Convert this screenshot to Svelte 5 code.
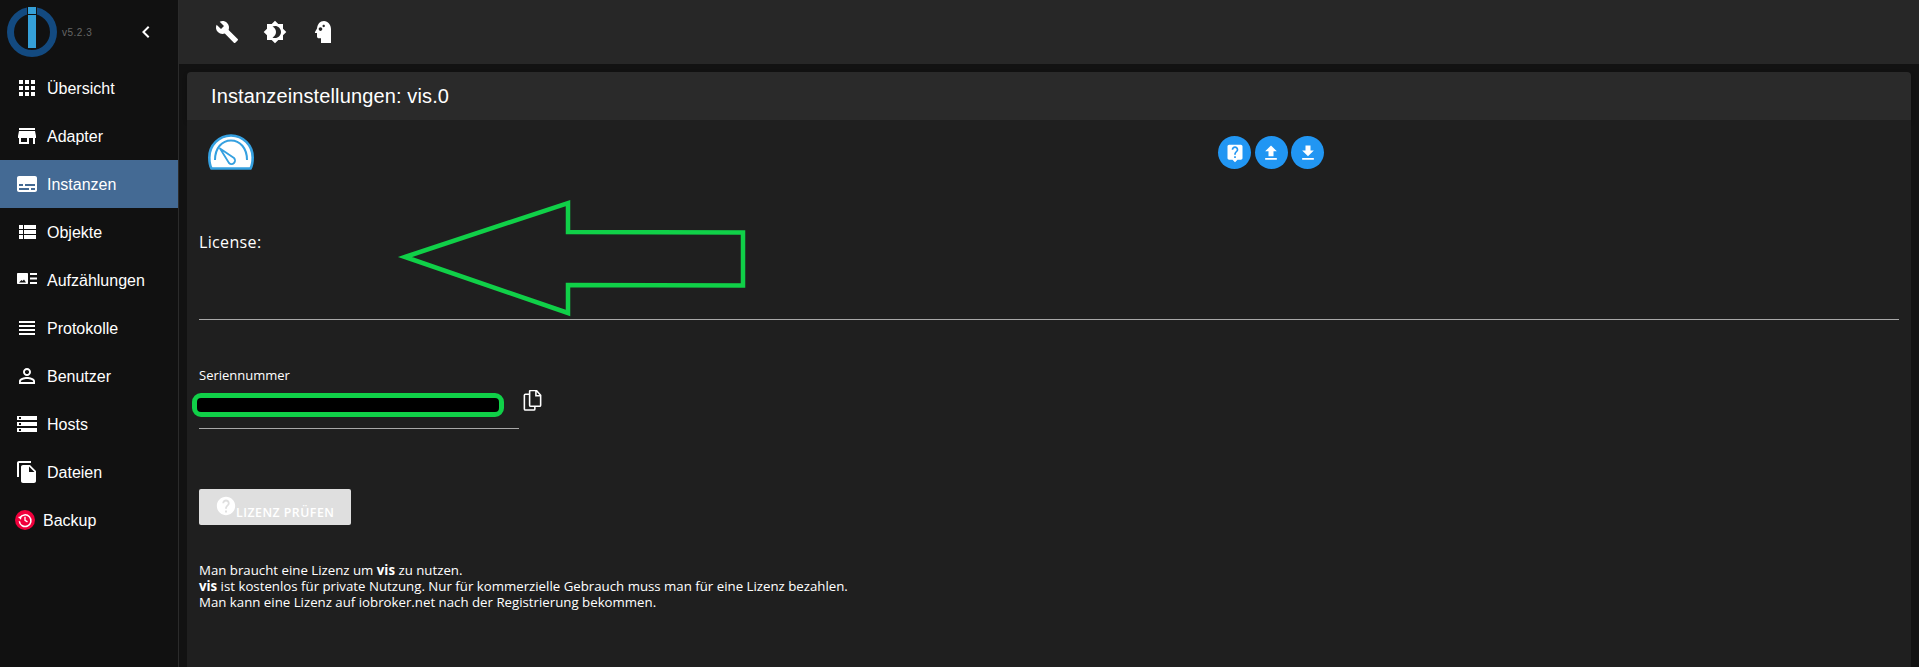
<script lang="ts">
  type NavItem = { label: string; path: string; active?: boolean };

  const nav: NavItem[] = [
    { label: 'Übersicht', path: 'M4 8h4V4H4v4zm6 12h4v-4h-4v4zm-6 0h4v-4H4v4zm0-6h4v-4H4v4zm6 0h4v-4h-4v4zm6-10v4h4V4h-4zm-6 4h4V4h-4v4zm6 6h4v-4h-4v4zm0 6h4v-4h-4v4z' },
    { label: 'Adapter', path: 'M20 4H4v2h16V4zm1 10v-2l-1-5H4l-1 5v2h1v6h10v-6h4v6h2v-6h1zm-9 4H6v-4h6v4z' },
    { label: 'Instanzen', active: true, path: 'M20 4H4c-1.1 0-2 .9-2 2v12c0 1.1.9 2 2 2h16c1.1 0 2-.9 2-2V6c0-1.1-.9-2-2-2zM4 12h4v2H4v-2zm10 6H4v-2h10v2zm6 0h-4v-2h4v2zm0-4H10v-2h10v2z' },
    { label: 'Objekte', path: 'M4 14h4v-4H4v4zm0 5h4v-4H4v4zM4 9h4V5H4v4zm5 5h12v-4H9v4zm0 5h12v-4H9v4zM9 5v4h12V5H9z' },
    { label: 'Aufzählungen', path: 'M3 5h9c.6 0 1 .4 1 1v9c0 .6-.4 1-1 1H3c-.6 0-1-.4-1-1V6c0-.6.4-1 1-1zm1 9.500h7l-2-3-1.500 1.500-1-1zM15 5h7v2h-7zm0 4.500h7v2h-7zm0 4.500h7v2h-7z' },
    { label: 'Protokolle', path: 'M4 15h16v-2H4v2zm0 4h16v-2H4v2zm0-8h16V9H4v2zm0-6v2h16V5H4z' },
    { label: 'Benutzer', path: 'M12 5.900c1.160 0 2.100.94 2.100 2.100s-.94 2.100-2.100 2.100S9.900 9.160 9.900 8s.94-2.100 2.100-2.100m0 9c2.970 0 6.100 1.460 6.100 2.100v1.100H5.900V17c0-.64 3.130-2.100 6.100-2.100M12 4C9.790 4 8 5.790 8 8s1.790 4 4 4 4-1.790 4-4-1.790-4-4-4zm0 9c-2.670 0-8 1.340-8 4v3h16v-3c0-2.660-5.330-4-8-4z' },
    { label: 'Hosts', path: 'M2 20h20v-4H2v4zm2-3h2v2H4v-2zM2 4v4h20V4H2zm4 3H4V5h2v2zm-4 7h20v-4H2v4zm2-3h2v2H4v-2z' },
    { label: 'Dateien', path: 'M16 1H4c-1.100 0-2 .9-2 2v14h2V3h12V1zm-1 4l6 6v10c0 1.100-.9 2-2 2H7.990C6.890 23 6 22.100 6 21l.01-14c0-1.100.89-2 1.990-2h7zm-1 7h5.500L14 6.500V12z' }
  ];

  const wrench = 'M22.700 19l-9.100-9.100c.9-2.300.4-5-1.500-6.900-2-2-5-2.400-7.400-1.300L9 6 6 9 1.600 4.700C.4 7.100.9 10.100 2.900 12.100c1.900 1.900 4.600 2.400 6.900 1.500l9.100 9.100c.4.4 1 .4 1.400 0l2.300-2.300c.5-.4.5-1.100.1-1.400z';
  const brightness = 'M20 8.690V4h-4.690L12 .69 8.690 4H4v4.690L.69 12 4 15.310V20h4.690L12 23.310 15.310 20H20v-4.690L23.310 12 20 8.690zM12 18c-.89 0-1.740-.2-2.500-.55C11.560 16.500 13 14.420 13 12s-1.440-4.500-3.500-5.450C10.260 6.200 11.110 6 12 6c3.310 0 6 2.690 6 6s-2.690 6-6 6z';
  const head = 'M13 1C9 1 6.500 4 6 8.500L4 12c-.2.500 0 1 .5 1H6v3.500c0 1 .8 1.800 2 1.800h2v4.700h10V9c0-4-3-8-7-8zM9.500 7.300c1 0 1.800.8 1.800 1.800s-.8 1.800-1.800 1.800-1.800-.8-1.800-1.800.8-1.800 1.800-1.800zm3.200-2.500c.7 0 1.200.5 1.200 1.200s-.5 1.200-1.200 1.200-1.200-.5-1.200-1.200.5-1.200 1.200-1.200z';

  const actions = [
    'M19 2H5c-1.110 0-2 .9-2 2v14c0 1.100.89 2 2 2h4l3 3 3-3h4c1.100 0 2-.9 2-2V4c0-1.100-.9-2-2-2zm-6 16h-2v-2h2v2zm2.070-7.750l-.9.92C13.450 11.900 13 12.500 13 14h-2v-.5c0-1.100.45-2.100 1.170-2.830l1.240-1.260c.37-.36.59-.86.59-1.410 0-1.100-.9-2-2-2s-2 .9-2 2H8c0-2.210 1.790-4 4-4s4 1.790 4 4c0 .88-.36 1.680-.93 2.250z',
    'M9 16h6v-6h4l-7-7-7 7h4zm-4 2h14v2H5z',
    'M19 9h-4V3H9v6H5l7 7 7-7zM5 18v2h14v-2H5z'
  ];
</script>

<div class="app">
  <aside class="sidebar">
    <div class="brand">
      <svg class="logo" viewBox="0 0 50 50" width="50" height="50">
        <circle cx="25" cy="25" r="21.500" fill="none" stroke="#134a80" stroke-width="7" />
        <rect x="20" y="0" width="10" height="10" fill="#111" />
        <rect x="21" y="0" width="8" height="7" fill="#35a0d8" />
        <rect x="21" y="8" width="8" height="33" fill="#35a0d8" />
      </svg>
      <span class="version">v5.2.3</span>
      <svg class="collapse" viewBox="0 0 24 24" width="24" height="24">
        <path fill="#fff" d="M15.410 7.410 14 6l-6 6 6 6 1.410-1.410L10.830 12z" />
      </svg>
    </div>

    <nav>
      {#each nav as item}
        <div class="nav-item" class:active={item.active}>
          <svg viewBox="0 0 24 24" width="24" height="24"><path fill="#fff" d={item.path} /></svg>
          <span>{item.label}</span>
        </div>
      {/each}
      <div class="nav-item backup">
        <svg viewBox="0 0 24 24" width="20" height="20">
          <circle cx="12" cy="12" r="12" fill="#f0003c" />
          <path fill="none" stroke="#fff" stroke-width="1.800" d="M6 9.500A7 7 0 1 1 5.200 13.500" />
          <path fill="#fff" d="M3.500 8.500 7.800 7.600 7.200 11.800z" />
          <path fill="none" stroke="#fff" stroke-width="1.600" d="M12 8v4.500l3 1.800" />
        </svg>
        <span>Backup</span>
      </div>
    </nav>
  </aside>

  <main class="main">
    <header class="topbar">
      <svg viewBox="0 0 24 24" width="24" height="24"><path fill="#fff" d={wrench} /></svg>
      <svg viewBox="0 0 24 24" width="24" height="24"><path fill="#fff" d={brightness} /></svg>
      <svg viewBox="0 0 24 24" width="24" height="24"><path fill="#fff" fill-rule="evenodd" d={head} /></svg>
    </header>

    <section class="page">
      <h1 class="title">Instanzeinstellungen: vis.0</h1>

      <div class="panel">
        <div class="panel-top">
          <svg class="gauge" viewBox="0 0 46 36" width="46" height="36">
            <path d="M3.500 34.500C1.500 31 1.300 27 1.300 23.500A21.700 22 0 0 1 44.700 23.500C44.700 27 44.500 31 42.500 34.500Z" fill="#fff" stroke="#35a0e0" stroke-width="2.600" stroke-linejoin="round" />
            <path d="M7 26C7 14 14 6.500 23 6.500S39 14 39 26" fill="none" stroke="#35a0e0" stroke-width="2" />
            <path d="M12 14.500 26 24a3.500 3.500 0 0 1-5 5z" fill="#fff" stroke="#35a0e0" stroke-width="1.800" stroke-linejoin="round" />
          </svg>
          <div class="actions">
            {#each actions as d}
              <button type="button" class="round">
                <svg viewBox="0 0 24 24" width="20" height="20"><path fill="#fff" d={d} /></svg>
              </button>
            {/each}
          </div>
        </div>

        <div class="license">License:</div>

        <div class="serial">
          <label for="serial-input">Seriennummer</label>
          <div class="serial-row">
            <div class="field">
              <div id="serial-input" class="redacted"></div>
            </div>
            <svg class="copy" viewBox="2 1 17.500 20" width="19" height="21">
              <path fill="none" stroke="#fff" stroke-width="1.500" d="M9 1.500h5.500l4 4.500v9.500c0 .6-.4 1-1 1H9c-.6 0-1-.4-1-1V2.500c0-.6.4-1 1-1zM14 1.500V6.500h4.500M8 5H4c-.6 0-1 .4-1 1v13c0 .6.4 1 1 1h8c.6 0 1-.4 1-1v-2.500" />
            </svg>
          </div>
        </div>

        <button type="button" class="check">
          <svg viewBox="0 0 24 24" width="22" height="22"><path fill="#fff" d="M12 2C6.480 2 2 6.480 2 12s4.480 10 10 10 10-4.480 10-10S17.520 2 12 2zm1 17h-2v-2h2v2zm2.070-7.750l-.9.92C13.450 12.900 13 13.500 13 15h-2v-.5c0-1.100.45-2.100 1.170-2.830l1.240-1.260c.37-.36.59-.86.59-1.410 0-1.100-.9-2-2-2s-2 .9-2 2H8c0-2.210 1.790-4 4-4s4 1.790 4 4c0 .88-.36 1.680-.93 2.250z" /></svg>
          <span>LIZENZ PRÜFEN</span>
        </button>

        <p class="note">
          Man braucht eine Lizenz um <b>vis</b> zu nutzen.<br />
          <b>vis</b> ist kostenlos für private Nutzung. Nur für kommerzielle Gebrauch muss man für eine Lizenz bezahlen.<br />
          Man kann eine Lizenz auf iobroker.net nach der Registrierung bekommen.
        </p>
      </div>
    </section>
  </main>

  <!-- hand-drawn annotation sitting on top of the screenshot -->
  <svg class="arrow" viewBox="0 0 1919 667" width="1919" height="667">
    <path d="M405 257 568 203V232L743 232.500V285.500L568 285V313Z" fill="none" stroke="#10d048" stroke-width="4.500" />
  </svg>
</div>

<style>
  :global(body) {
    background: #121212;
  }

  .app {
    position: relative;
    display: flex;
    height: 667px;
    overflow: hidden;
    background: #121212;
    color: #fff;
    font-family: "Liberation Sans", Arial, sans-serif;
  }

  .sidebar {
    flex: 0 0 178px;
    border-right: 1px solid #2b2b2b;
    background: #111;
  }

  .brand {
    display: flex;
    align-items: center;
    height: 64px;
    padding-left: 7px;
  }

  .logo {
    flex: none;
  }

  .version {
    margin: 0 0 0 5px;
    color: #666;
    font-size: 10px;
    letter-spacing: 0.5px;
  }

  .collapse {
    margin-left: 42px;
  }

  .nav-item {
    display: flex;
    align-items: center;
    gap: 8px;
    height: 48px;
    padding-left: 15px;
    font-size: 16px;
  }

  .nav-item span {
    padding-top: 2px;
  }

  .nav-item.active {
    background: #446a94;
  }

  .main {
    flex: 1;
    min-width: 0;
  }

  .topbar {
    display: flex;
    align-items: center;
    gap: 24px;
    height: 64px;
    padding-left: 36px;
    background: #272727;
  }

  .page {
    margin: 8px 8px 0;
  }

  .title {
    height: 48px;
    margin: 0;
    padding-left: 24px;
    border-radius: 4px 4px 0 0;
    background: #2a2a2a;
    box-shadow: 0 2px 4px rgba(0, 0, 0, 0.25);
    font-size: 20px;
    font-weight: 400;
    letter-spacing: 0.13px;
    line-height: 48px;
  }

  .panel {
    height: 547px;
    padding: 0 12px;
    background: #1f1f1f;
    font-family: "Open Sans", sans-serif;
  }

  .panel-top {
    display: flex;
    height: 50px;
    padding: 14px 0 0 9px;
    box-sizing: border-box;
  }

  .actions {
    display: flex;
    gap: 3.700px;
    height: 33px;
    margin: 2px 0 0 964px;
  }

  .round {
    display: grid;
    place-items: center;
    width: 33px;
    height: 33px;
    padding: 0;
    border: 0;
    border-radius: 50%;
    background: #2196f3;
  }

  .license {
    height: 150px;
    padding-top: 61px;
    box-sizing: border-box;
    border-bottom: 1px solid #a8a8a8;
    font-size: 16px;
    letter-spacing: 0.35px;
    line-height: 22px;
  }

  .serial {
    margin-top: 48px;
  }

  .serial label {
    display: block;
    font-size: 13px;
    line-height: 14px;
  }

  .serial-row {
    display: flex;
    align-items: flex-start;
    margin-top: 11px;
  }

  .field {
    width: 320px;
    height: 36px;
    box-sizing: border-box;
    border-bottom: 1px solid #a8a8a8;
  }

  .redacted {
    width: 302px;
    height: 14px;
    margin-left: -7px;
    border: 5px solid #10d048;
    border-radius: 9px;
    background: #000;
  }

  .copy {
    margin: -3px 0 0 4px;
  }

  .check {
    display: flex;
    align-items: center;
    width: 152px;
    height: 36px;
    margin-top: 60px;
    padding: 0 0 0 16px;
    border: 0;
    border-radius: 2px;
    background: #dfdfdf;
    color: #fff;
    font-family: "Open Sans", sans-serif;
    font-size: 12.300px;
    font-weight: 600;
    letter-spacing: 0.5px;
  }

  .check svg {
    margin: -3px -1px 0 0;
  }

  .check span {
    margin-top: 11px;
  }

  .note {
    margin: 37px 0 0;
    font-size: 13.250px;
    line-height: 16px;
  }

  .note b {
    font-weight: 700;
  }

  .arrow {
    position: absolute;
    top: 0;
    left: 0;
    pointer-events: none;
  }
</style>
